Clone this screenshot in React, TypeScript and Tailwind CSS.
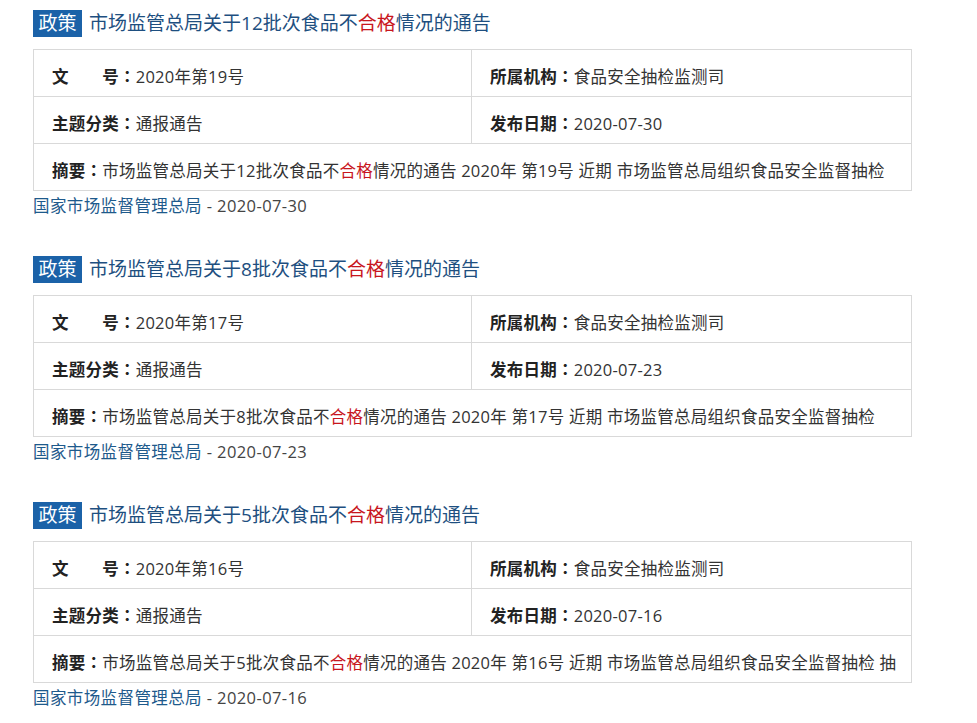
const font = { fontFamily: '"Open Sans", "Noto Sans CJK SC", sans-serif' };

type Notice = {
  batch: string;
  docNo: string;
  date: string;
  tail: string;
};

const notices: Notice[] = [
  { batch: '12', docNo: '19', date: '2020-07-30', tail: '' },
  { batch: '8', docNo: '17', date: '2020-07-23', tail: '' },
  { batch: '5', docNo: '16', date: '2020-07-16', tail: ' 抽' },
];

function Title({ batch }: { batch: string }) {
  return (
    <span>
      市场监管总局关于{batch}批次食品不<span className="text-[#c8161d]">合格</span>情况的通告
    </span>
  );
}

// 冒号居中显示（繁体字形的全角冒号是居中的）
function Label({ text }: { text: string }) {
  return (
    <b className="font-bold text-[#222]">
      {text}
      <span style={{ fontFamily: '"Noto Sans CJK TC", sans-serif' }}>：</span>
    </b>
  );
}

function Item({ n }: { n: Notice }) {
  return (
    <div className="pt-[10px] h-[246px]">
      <div className="flex items-center h-[27px]">
        <span className="bg-[#1b62a8] text-white text-[19px] leading-[27px] h-[27px] w-[49px] text-center">
          政策
        </span>
        <span className="ml-[7px] text-[19px] text-[#1e4f80] leading-[27px]">
          <Title batch={n.batch} />
        </span>
      </div>

      <div className="mt-[12px] w-[879px] border border-[#d9d9d9] text-[16.5px] text-[#333] tracking-[0.25px]">
        <div className="flex h-[47px] border-b border-[#d9d9d9]">
          <div className="w-[438px] border-r border-[#d9d9d9] flex items-center pl-[18px] pt-[8px]">
            <Label text="文　　号" />
            <span>2020年第{n.docNo}号</span>
          </div>
          <div className="flex-1 flex items-center pl-[18px] pt-[8px]">
            <Label text="所属机构" />
            <span>食品安全抽检监测司</span>
          </div>
        </div>
        <div className="flex h-[47px] border-b border-[#d9d9d9]">
          <div className="w-[438px] border-r border-[#d9d9d9] flex items-center pl-[18px] pt-[8px]">
            <Label text="主题分类" />
            <span>通报通告</span>
          </div>
          <div className="flex-1 flex items-center pl-[18px] pt-[8px]">
            <Label text="发布日期" />
            <span>{n.date}</span>
          </div>
        </div>
        <div className="flex h-[46px] items-center pl-[18px] pt-[8px] whitespace-nowrap overflow-hidden">
          <Label text="摘要" />
          <span>
            <Title batch={n.batch} /> 2020年 第{n.docNo}号 近期 市场监管总局组织食品安全监督抽检{n.tail}
          </span>
        </div>
      </div>

      <div className="h-[31px] flex items-center text-[16.5px] tracking-[0.4px]">
        <span className="text-[#1e5a8c]">国家市场监督管理总局</span>
        <span className="text-[#444]">&nbsp;-&nbsp;{n.date}</span>
      </div>
    </div>
  );
}

export default function App() {
  return (
    <div className="w-[977px] h-[723px] bg-white overflow-hidden pl-[33px]" style={font}>
      {notices.map((n) => (
        <Item key={n.date} n={n} />
      ))}
    </div>
  );
}
